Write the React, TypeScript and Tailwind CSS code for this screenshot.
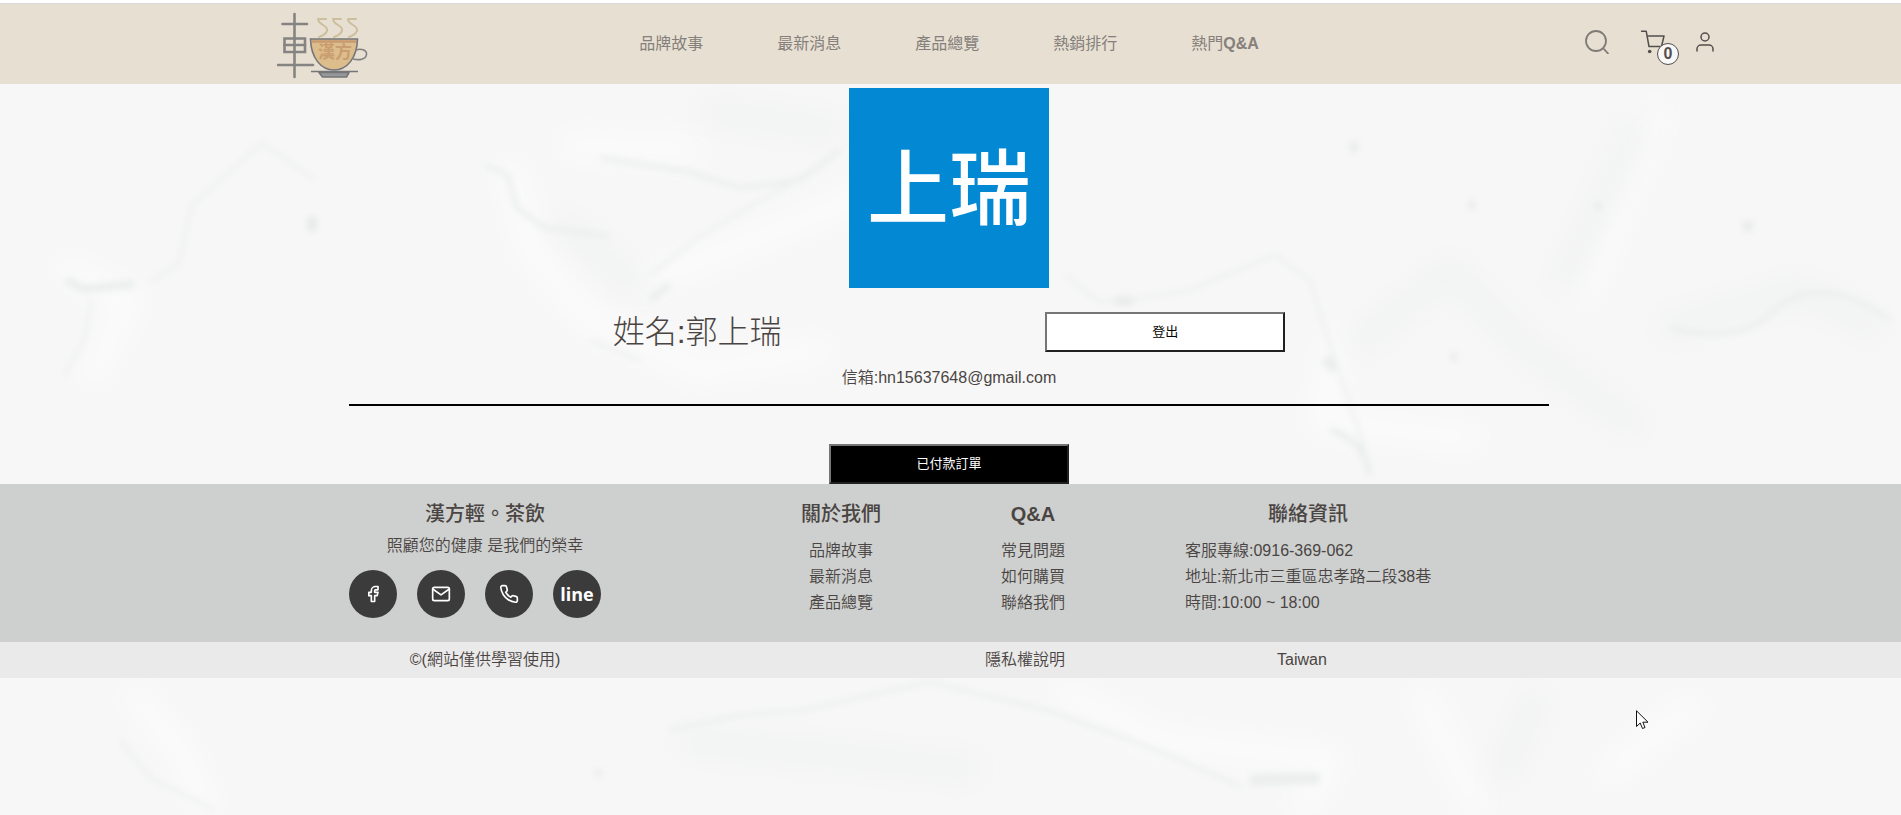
import { FiMail, FiPhone, FiUser } from "react-icons/fi";
import { TbBrandFacebook } from "react-icons/tb";

const navLinks = ["品牌故事", "最新消息", "產品總覽", "熱銷排行"];

const footerLists = [
  { title: "關於我們", items: ["品牌故事", "最新消息", "產品總覽"] },
  { title: "Q&A", items: ["常見問題", "如何購買", "聯絡我們"] },
];

const contactLines = [
  "客服專線:0916-369-062",
  "地址:新北市三重區忠孝路二段38巷",
  "時間:10:00 ~ 18:00",
];

function PaperTexture() {
  return (
    <svg
      aria-hidden="true"
      className="absolute inset-0 -z-10 h-full w-full"
      viewBox="0 0 1901 815"
      preserveAspectRatio="xMidYMin slice"
      fill="none"
    >
      <defs>
        <filter id="soft" x="-20%" y="-20%" width="140%" height="140%">
          <feGaussianBlur stdDeviation="3" />
        </filter>
        <filter id="wide" x="-30%" y="-30%" width="160%" height="160%">
          <feGaussianBlur stdDeviation="14" />
        </filter>
      </defs>
      <g filter="url(#wide)" stroke="#fcfcfc" strokeWidth="22">
        <path d="M510 160L530 250L590 320L700 370L830 350" />
        <path d="M650 280L830 210L1000 120" />
        <path d="M60 265L130 300L90 380" />
        <path d="M1580 300L1660 110" />
        <path d="M1340 330L1320 420L1480 440" />
        <path d="M560 145L700 150" />
        <path d="M130 690L180 750L210 810" />
        <path d="M1060 690L1160 740L1330 760L1300 815" />
        <path d="M1420 690L1480 815" />
        <path d="M1700 700L1600 780" />
      </g>
      <g filter="url(#wide)" stroke="#f1f2f2" strokeWidth="24">
        <path d="M1560 290L1640 120" />
        <path d="M1350 350L1450 270L1530 350L1640 430" />
        <path d="M560 220L640 290" />
        <path d="M700 110L840 130" />
        <path d="M1660 330L1800 290L1880 330" />
        <path d="M680 740L980 770" />
        <path d="M1540 690L1500 780" />
      </g>
      <g filter="url(#soft)" stroke="#eceeee" strokeWidth="5">
        <path d="M66 280L84 289L134 284" strokeWidth="9" />
        <path d="M150 282L178 265L192 205L262 143L315 180" strokeWidth="3" />
        <path d="M92 300L84 340L64 376" strokeWidth="3" />
        <path d="M485 165L508 175L517 208L545 228L610 236" />
        <path d="M600 158L690 172L740 188L800 180L840 150" />
        <path d="M650 275L700 236L830 160" strokeWidth="3" />
        <path d="M650 300L670 284" strokeWidth="8" />
        <path d="M590 340L640 360" strokeWidth="3" />
        <path d="M1065 275L1100 302L1130 300L1190 290L1275 255L1310 280L1325 330L1340 375L1362 440L1370 475" strokeWidth="3" />
        <path d="M1325 358L1335 370" strokeWidth="12" />
        <path d="M1330 430Q1365 440 1370 475" strokeWidth="7" />
        <path d="M1670 328Q1740 345 1775 310Q1820 270 1890 320" />
        <path d="M670 730L740 715L800 711L870 695L930 682L1050 711L1130 740L1180 760L1240 786" strokeWidth="4" />
        <path d="M1250 780L1320 778" strokeWidth="12" />
        <path d="M120 740L150 778L215 810" strokeWidth="3" />
      </g>
      <g filter="url(#soft)" fill="#e9ebea">
        <ellipse cx="312" cy="224" rx="6" ry="9" />
        <ellipse cx="1354" cy="147" rx="5" ry="6" />
        <ellipse cx="1748" cy="226" rx="6" ry="6" />
        <ellipse cx="1454" cy="357" rx="4" ry="5" />
        <ellipse cx="1598" cy="206" rx="4" ry="4" />
        <ellipse cx="1472" cy="205" rx="4" ry="5" />
        <ellipse cx="1124" cy="301" rx="10" ry="5" />
        <ellipse cx="598" cy="773" rx="4" ry="4" />
      </g>
    </svg>
  );
}

function Logo() {
  const steam = "M49 7H41Q41 10 46 13Q51 16 50 19Q48 23 42 25";
  return (
    <svg aria-hidden="true" className="h-[68px] w-[92px]" viewBox="0 0 92 68" fill="none">
      <g stroke="#858482" strokeWidth="2.6" strokeLinecap="round">
        <path d="M17.5 2V65" />
        <path d="M5.5 12H30" />
        <path d="M7.5 26.5H28V40H7.5Z" />
        <path d="M7.5 33H28" />
        <path d="M1 53H36" />
      </g>
      <g stroke="#cdbf9d" strokeWidth="2" strokeLinecap="round" strokeLinejoin="round">
        <path d={steam} />
        <path d={steam} transform="translate(15 0)" />
        <path d={steam} transform="translate(30 0)" />
      </g>
      <path d="M33.5 27H80.5C80 46 70 58 57 58S34 46 33.5 27Z" fill="#dcbd8b" stroke="#74767a" strokeWidth="1.6" />
      <path d="M35 29.5H79" stroke="#c79a6f" strokeWidth="2.6" />
      <path d="M79 38C84 36 90 38 89.5 42.5C89 47.5 82 48.500 76 47" stroke="#808080" strokeWidth="1.6" />
      <path d="M42 60.5H72L69.5 65H45.5Z" fill="#96989a" stroke="#74767a" strokeWidth="1.6" strokeLinejoin="round" />
      <path d="M34 59.5H81" stroke="#74767a" strokeWidth="1.6" />
      <text x="58" y="46" textAnchor="middle" fontSize="17" fontWeight="700" fill="#c99d70">
        漢方
      </text>
    </svg>
  );
}

function SearchIcon() {
  return (
    <svg aria-hidden="true" className="size-6" viewBox="0 0 24 24" fill="none" stroke="#7f7b77" strokeWidth="1.8">
      <circle cx="11" cy="11" r="10" />
      <path d="M18 18L23.5 24" />
    </svg>
  );
}

function CartIcon() {
  return (
    <svg aria-hidden="true" className="size-6" viewBox="0 0 24 24" fill="none" stroke="#544f4d" strokeWidth="1.5">
      <path d="M0 1.2H5.2L8 16.5H20.5L23 6H6" strokeLinejoin="round" />
      <circle cx="8.7" cy="21.5" r="1.8" fill="#544f4d" stroke="none" />
      <circle cx="19.5" cy="21.5" r="1.8" fill="#544f4d" stroke="none" />
    </svg>
  );
}

function Header() {
  return (
    <header className="mt-[3px] border-t border-[#d9dad9] bg-[#e7dfd2] pr-[3px]">
      <div className="mx-auto grid h-20 max-w-[1536px] grid-cols-[1fr_auto_1fr] items-center">
        <a href="#home" aria-label="漢方輕。茶飲" className="ml-24 w-fit pt-1">
          <Logo />
        </a>
        <nav className="flex gap-[74px] text-[#85807b]">
          {navLinks.map((label) => (
            <a key={label} href="#nav">
              {label}
            </a>
          ))}
          <a href="#qa">
            熱門<span className="font-bold">Q&amp;A</span>
          </a>
        </nav>
        <div className="flex items-center justify-end gap-7 pb-1 text-[#544f4d]">
          <button type="button" aria-label="搜尋" className="mr-1">
            <SearchIcon />
          </button>
          <button type="button" aria-label="購物車" className="relative">
            <CartIcon />
            <span className="absolute top-[13px] left-4 flex size-[22px] items-center justify-center rounded-full border border-[#544f4d] bg-[#f8f8f8] text-base leading-none font-bold">
              0
            </span>
          </button>
          <button type="button" aria-label="會員">
            <FiUser className="size-6" strokeWidth={1.5} />
          </button>
        </div>
      </div>
    </header>
  );
}

function Profile() {
  return (
    <main className="pt-1 pr-[3px]">
      <div className="mx-auto flex max-w-[1200px] flex-col items-center">
        <div className="flex size-[200px] items-center justify-center bg-[#0388d3] pt-1 text-[82px] leading-none font-medium text-white">
          上瑞
        </div>
        <div className="mt-5 flex w-full items-center justify-evenly">
          <h1 className="text-[32px] leading-12 font-light">姓名:郭上瑞</h1>
          <button
            type="button"
            className="h-10 w-60 border-2 border-t-[#767676] border-r-[#212121] border-b-[#212121] border-l-[#767676] bg-white text-[13px] text-black"
          >
            登出
          </button>
        </div>
        <p className="mt-[10px] font-[350]">信箱:hn15637648@gmail.com</p>
        <hr className="mt-[14px] w-full border-t-2 border-black" />
        <button
          type="button"
          className="mt-[38px] h-10 w-60 border-2 border-t-[#767676] border-r-[#212121] border-b-[#212121] border-l-[#767676] bg-black text-[13px] text-white"
        >
          已付款訂單
        </button>
      </div>
    </main>
  );
}

const circle = "flex size-12 items-center justify-center rounded-full bg-[#3b3b3b] text-white";

function Footer() {
  return (
    <footer>
      <div className="bg-[#ced0cf] pr-[3px]">
        <div className="mx-auto grid max-w-[1200px] grid-cols-[332px_80px_64px_246px] gap-x-[120px] pt-[15px] pb-6">
          <div className="w-[272px]">
            <h2 className="text-center text-xl leading-[30px] font-medium">漢方輕。茶飲</h2>
            <p className="mt-[5px] text-center font-[350]">照顧您的健康 是我們的榮幸</p>
            <div className="mt-3 flex gap-5">
              <a href="#facebook" aria-label="Facebook" className={circle}>
                <TbBrandFacebook className="size-5" />
              </a>
              <a href="#mail" aria-label="Email" className={circle}>
                <FiMail className="size-5" />
              </a>
              <a href="#phone" aria-label="電話" className={circle}>
                <FiPhone className="size-5" />
              </a>
              <a href="#line" className={circle}>
                <span className="font-['Open_Sans',sans-serif] text-lg leading-6 font-bold">line</span>
              </a>
            </div>
          </div>
          {footerLists.map(({ title, items }) => (
            <div key={title} className="text-center">
              <h2 className={title === "Q&A" ? "text-xl leading-[30px] font-bold" : "text-xl leading-[30px] font-medium"}>
                {title}
              </h2>
              <ul className="mt-[9px] leading-[26px] font-[350]">
                {items.map((item) => (
                  <li key={item}>
                    <a href="#info">{item}</a>
                  </li>
                ))}
              </ul>
            </div>
          ))}
          <div>
            <h2 className="text-center text-xl leading-[30px] font-medium">聯絡資訊</h2>
            <ul className="mt-[9px] leading-[26px] font-[350] whitespace-nowrap">
              {contactLines.map((line) => (
                <li key={line}>{line}</li>
              ))}
            </ul>
          </div>
        </div>
      </div>
      <div className="bg-[#eaeaea] pr-[3px]">
        <div className="mx-auto grid h-9 max-w-[1200px] grid-cols-[332px_80px_64px_246px] items-center gap-x-[120px] font-[350]">
          <p className="w-[272px] text-center">©(網站僅供學習使用)</p>
          <a href="#privacy" className="col-span-2 text-right">
            隱私權說明
          </a>
          <p className="pr-3 text-center">Taiwan</p>
        </div>
      </div>
    </footer>
  );
}

export default function App() {
  return (
    <div className="relative isolate flow-root min-h-screen overflow-hidden bg-[#f7f7f7] font-['Liberation_Sans','Noto_Sans_CJK_TC',sans-serif] text-base text-[#4a4543]">
      <PaperTexture />
      <div className="absolute inset-x-0 top-0 h-[3px] bg-white" />
      <Header />
      <Profile />
      <Footer />
      <svg aria-hidden="true" className="absolute top-[710px] left-[1636px] h-5 w-[13px]" viewBox="0 0 13 20">
        <path d="M0.5 0.8V16.5L4.2 13L6.5 18.5L9 17.5L6.8 12.2H12Z" fill="#fff" stroke="#111" />
      </svg>
    </div>
  );
}
